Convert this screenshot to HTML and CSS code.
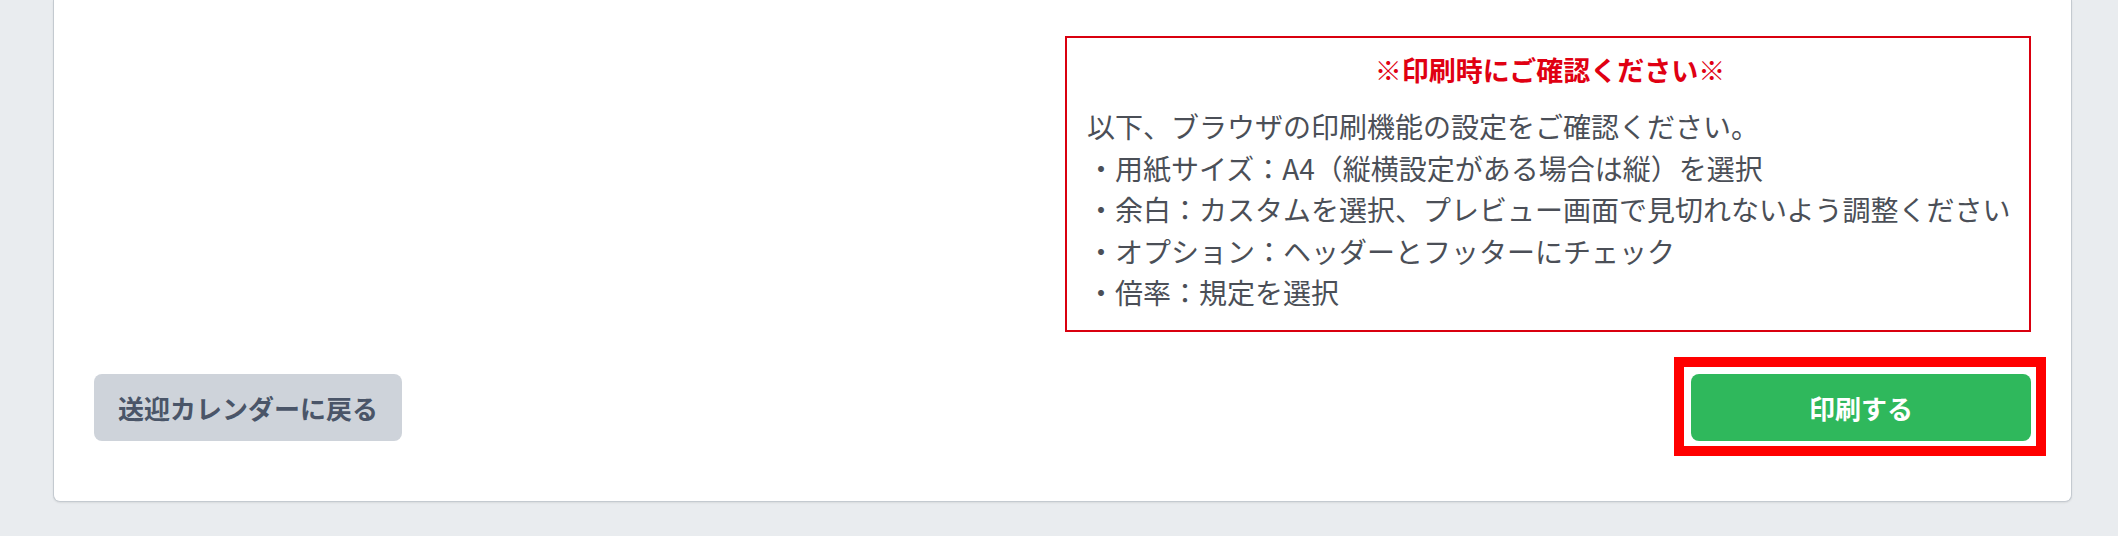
FILE: index.html
```html
<!DOCTYPE html>
<html lang="ja">
<head>
<meta charset="utf-8">
<title>印刷</title>
<link rel="stylesheet" href="styles.css">
</head>
<body>
<main class="card">
  <section class="notice">
    <h2 class="notice-title">※印刷時にご確認ください※</h2>
    <p class="notice-line">以下、ブラウザの印刷機能の設定をご確認ください。</p>
    <p class="notice-line">・用紙サイズ：A4（縦横設定がある場合は縦）を選択</p>
    <p class="notice-line">・余白：カスタムを選択、プレビュー画面で見切れないよう調整ください</p>
    <p class="notice-line">・オプション：ヘッダーとフッターにチェック</p>
    <p class="notice-line">・倍率：規定を選択</p>
  </section>
  <div class="actions">
    <button class="btn btn-back" type="button">送迎カレンダーに戻る</button>
    <button class="btn btn-print" type="button">印刷する</button>
  </div>
</main>
</body>
</html>
```

FILE: styles.css
```css
html, body {
  margin: 0;
  padding: 0;
}

body {
  background: #e9ecef;
  font-family: "Noto Sans CJK JP", "Noto Sans", sans-serif;
  padding: 0 46px 34px 53px;
}

.card {
  background: #ffffff;
  border: 1px solid #c4cad0;
  border-top: 0;
  border-radius: 0 0 7px 7px;
  box-shadow: 0 1px 2px rgba(0, 0, 0, 0.08);
  padding: 36px 40px 60px 40px;
}

.notice {
  width: 966px;
  box-sizing: border-box;
  margin-left: auto;
  border: 2px solid #d9000f;
  padding: 11px 16px 16px 20px;
  color: #4b4f57;
}

.notice-title {
  margin: 0 0 15px 0;
  text-align: center;
  color: #e00012;
  font-size: 27px;
  line-height: 42px;
  font-weight: 700;
}

.notice-line {
  margin: 0;
  font-size: 28px;
  line-height: 41.5px;
  white-space: nowrap;
}

.actions {
  margin-top: 42px;
  display: flex;
  justify-content: space-between;
  align-items: center;
}

.btn {
  font-family: "Noto Sans CJK JP", "Noto Sans", sans-serif;
  font-size: 26px;
  font-weight: 700;
  height: 67px;
  border: 0;
  border-radius: 8px;
  padding: 0 24px;
  line-height: 67px;
}

.btn-back {
  width: 308px;
  background: #ced3da;
  color: #4a5568;
}

.btn-print {
  position: relative;
  width: 340px;
  background: #2fb85c;
  color: #ffffff;
}

.btn-print::after {
  content: "";
  position: absolute;
  top: -17px;
  left: -17px;
  right: -15px;
  bottom: -15px;
  border: 10px solid #ff0000;
  pointer-events: none;
}
```
